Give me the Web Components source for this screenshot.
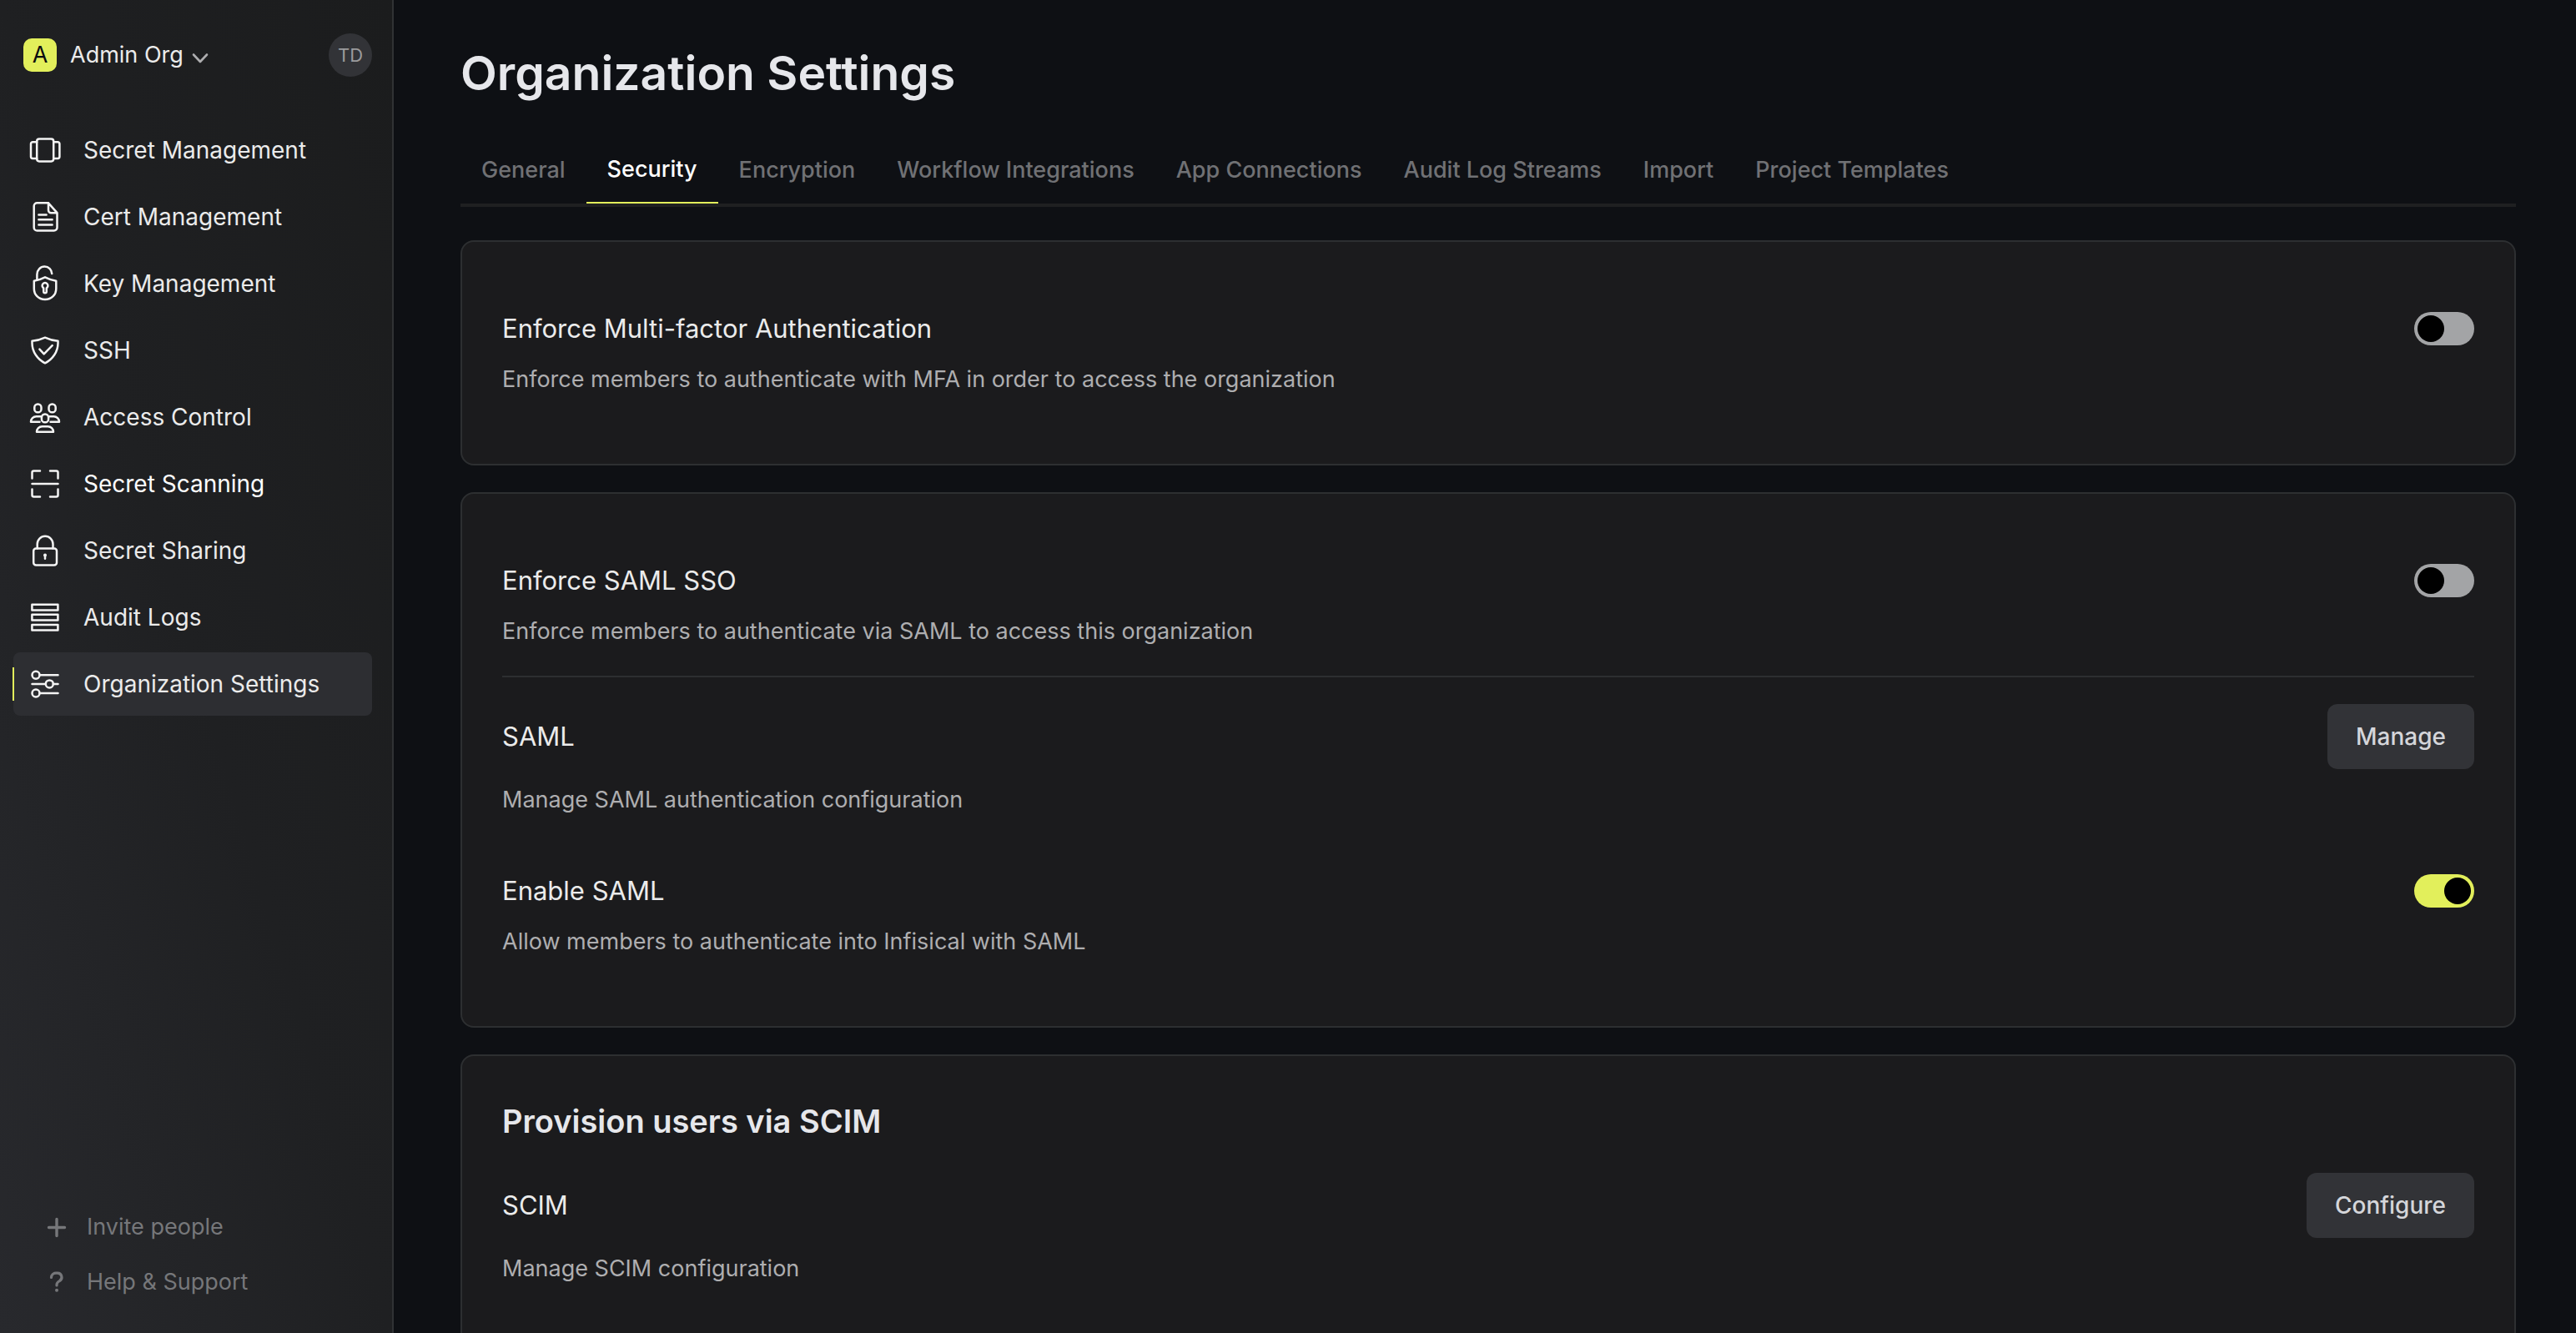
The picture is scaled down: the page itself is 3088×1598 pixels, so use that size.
<!DOCTYPE html>
<html lang="en">
<head>
<meta charset="utf-8">
<title>Organization Settings</title>
<style>
  html, body { margin: 0; height: 100%; }
  body {
    --bg: #0e1014;
    --panel: #1b1b1d;
    --line: #2d2f31;
    --primary: #e2ef5b;
    --text: #ebebeb;
    --soft: #aeaeb0;
    --muted: #707174;
    --control: #323337;
    background: var(--bg);
    color: var(--text);
    font: 400 28px/42px Inter, "Liberation Sans", sans-serif;
  }
</style>
</head>
<body>
<app-shell>
  <side-bar slot="side">
    <org-switcher slot="top" initial="A" user="TD">Admin Org</org-switcher>
    <nav-item icon="vault">Secret Management</nav-item>
    <nav-item icon="note">Cert Management</nav-item>
    <nav-item icon="unlock">Key Management</nav-item>
    <nav-item icon="shield">SSH</nav-item>
    <nav-item icon="groups">Access Control</nav-item>
    <nav-item icon="scan" bright>Secret Scanning</nav-item>
    <nav-item icon="lock">Secret Sharing</nav-item>
    <nav-item icon="list">Audit Logs</nav-item>
    <nav-item icon="sliders" active>Organization Settings</nav-item>
    <foot-action slot="bottom" icon="plus">Invite people</foot-action>
    <foot-action slot="bottom" icon="question">Help &amp; Support</foot-action>
  </side-bar>
  <settings-page>
    <span slot="title">Organization Settings</span>
    <tab-item slot="tabs">General</tab-item>
    <tab-item slot="tabs" active>Security</tab-item>
    <tab-item slot="tabs">Encryption</tab-item>
    <tab-item slot="tabs">Workflow Integrations</tab-item>
    <tab-item slot="tabs">App Connections</tab-item>
    <tab-item slot="tabs">Audit Log Streams</tab-item>
    <tab-item slot="tabs">Import</tab-item>
    <tab-item slot="tabs">Project Templates</tab-item>
    <settings-card>
      <toggle-row>
        <span slot="label">Enforce Multi-factor Authentication</span>
        Enforce members to authenticate with MFA in order to access the organization
      </toggle-row>
    </settings-card>
    <settings-card>
      <toggle-row divided>
        <span slot="label">Enforce SAML SSO</span>
        Enforce members to authenticate via SAML to access this organization
      </toggle-row>
      <action-row>
        <span slot="label">SAML</span>
        <span slot="action">Manage</span>
        Manage SAML authentication configuration
      </action-row>
      <toggle-row checked>
        <span slot="label">Enable SAML</span>
        Allow members to authenticate into Infisical with SAML
      </toggle-row>
    </settings-card>
    <settings-card>
      <card-heading>Provision users via SCIM</card-heading>
      <action-row>
        <span slot="label">SCIM</span>
        <span slot="action">Configure</span>
        Manage SCIM configuration
      </action-row>
    </settings-card>
  </settings-page>
</app-shell>

<script>
const ICONS = {
  vault: '<rect x="10.2" y="6.4" width="20" height="27" rx="2.8"/><path d="M10.2 10.2H5.2a2.2 2.2 0 0 0-2.2 2.2v15.4a2.2 2.2 0 0 0 2.2 2.2h5M30.2 10.2h5a2.2 2.2 0 0 1 2.2 2.2v15.4a2.2 2.2 0 0 1-2.2 2.2h-5"/>',
  note: '<path d="M24 3.3H10.5A3.8 3.8 0 0 0 6.7 7.1v25.6a3.8 3.8 0 0 0 3.8 3.8h20.2a3.8 3.8 0 0 0 3.8-3.8V15.2M24 3.3v8.7a3.2 3.2 0 0 0 3.2 3.2h7.3L24 3.3M12.4 17.4h9.2M12.4 23.3h16.2M12.4 29.6h16.2"/>',
  unlock: '<path d="M6.8 16.8Q13 15.800 20 12.300Q27 15.800 33.300 16.800V26C33.300 33.200 28 39 20 39S6.800 33.200 6.800 26Z"/><path d="M10.400 15.200V9C10.400 3.800 14.300-.4 19.400-.4C24.600-.4 28 3.500 28.200 8"/><path d="M18.200 25.400A3.400 3.400 0 1 1 21.800 25.400V29.500a1.800 1.800 0 0 1-3.600 0Z"/>',
  shield: '<path d="M20 4.7Q12.5 8.3 4.5 8.8V11.5C4.5 21.5 11 31 20 35.3C29 31 35.5 21.5 35.5 11.5V8.8Q27.5 8.3 20 4.7Z"/><path d="M13.4 18.6L18.7 24.4L28.7 14.2"/>',
  groups: '<rect x="7.3" y="4.5" width="8.2" height="9.8" rx="3.9"/><rect x="24.5" y="4.5" width="8.2" height="9.8" rx="3.9"/><rect x="15.9" y="16.5" width="8.2" height="9.8" rx="3.9"/><path d="M14.6 19.2H9.5a6.5 6.5 0 0 0-6.5 6.5H13.5M25.4 19.2H30.5a6.5 6.5 0 0 1 6.5 6.5H26.5M10 37.7a6.5 6.5 0 0 1 6.5-6.5h7a6.5 6.5 0 0 1 6.5 6.5Z"/>',
  scan: '<path d="M4.5 13.5V6.5a2 2 0 0 1 2-2H14M26 4.5h7.5a2 2 0 0 1 2 2V13.5M35.5 26.5V33.5a2 2 0 0 1-2 2H26M14 35.5H6.5a2 2 0 0 1-2-2V26.5M4.5 20H35.5"/>',
  lock: '<rect x="6.2" y="17.6" width="27.8" height="19.8" rx="3"/><path d="M10.7 17.6V12.2a9.4 9.4 0 0 1 18.8 0V17.6"/><path stroke-width="4" d="M20 25.5V25.6"/><path d="M20 25.5V29.8"/>',
  list: '<rect x="4.4" y="4.8" width="31" height="6.6"/><rect x="4.4" y="16.8" width="31" height="6.6"/><rect x="4.4" y="29" width="31" height="6.6"/>',
  sliders: '<circle cx="9" cy="9.2" r="4.5"/><path d="M13.5 9.2H35.5M4.5 19.9H20.8M29.8 19.9H35.5M13.5 31H35.5"/><circle cx="25.3" cy="19.9" r="4.5"/><circle cx="9" cy="31" r="4.5"/>',
  plus: '<path stroke-width="3.4" d="M20 10.5V30.5M10.5 20.5H29.5"/>',
  question: '<path stroke-width="3.2" d="M13.5 14.5a5.5 5.5 0 0 1 5.5-5.3h2a5 5 0 0 1 2.5 9.3C21.5 19.7 20 20.6 20 23V24"/><path stroke-width="4" d="M20 29.7V29.8"/>',
  chevron: '<path stroke-width="2.6" d="M12 15.5L20 24L28 15.5"/>'
};
const icon = name => `<svg class="icon" viewBox="0 0 40 40" width="40" height="40" fill="none" stroke="currentColor" stroke-width="2.5" stroke-linecap="round" stroke-linejoin="round" aria-hidden="true">${ICONS[name]}</svg>`;

const BASE = `
  *, *::before { box-sizing: border-box; }
  button { font: inherit; color: inherit; background: none; border: 0; margin: 0; padding: 0; cursor: pointer; }
  a { color: inherit; text-decoration: none; }
  .icon { flex: none; display: block; overflow: visible; }
`;
function define(name, render) {
  customElements.define(name, class extends HTMLElement {
    constructor() {
      super();
      this.attachShadow({ mode: "open" });
    }
    connectedCallback() {
      if (!this.shadowRoot.firstChild) {
        const t = document.createElement("template");
        const { css, html } = render(this);
        t.innerHTML = `<style>${BASE}${css}</style>${html}`;
        this.shadowRoot.append(t.content.cloneNode(true));
      }
    }
  });
}

define("app-shell", () => ({
  css: `
    :host { display: flex; height: 100vh; overflow: hidden; }
    main { flex: 1; min-width: 0; overflow-y: auto; scrollbar-width: none; }`,
  html: `<slot name="side"></slot><main><slot></slot></main>`
}));

define("side-bar", () => ({
  css: `
    :host { display: flex; flex: none; width: 472px; box-sizing: border-box; border-right: 2px solid #303234;
      background: linear-gradient(to top right, #28292d, #1f2022 50%, #1b1c1d); }
    aside { display: flex; flex-direction: column; flex: 1; padding: 40px 24px 40px 16px; }
    nav { display: flex; flex-direction: column; gap: 4px; margin-top: 50px; }
    footer { display: flex; flex-direction: column; gap: 24px; margin-top: auto; padding-left: 32px; }`,
  html: `<aside><slot name="top"></slot><nav><slot></slot></nav><footer><slot name="bottom"></slot></footer></aside>`
}));

define("org-switcher", el => ({
  css: `
    :host { display: flex; justify-content: space-between; align-items: center; height: 52px; padding-left: 12px; }
    .org { display: flex; align-items: center; font-size: 27px; }
    .logo { width: 40px; height: 40px; line-height: 40px; border-radius: 10px; background: var(--primary); color: #0c0d0f; text-align: center; }
    .name { margin: 0 0 0 16px; }
    .org .icon { color: #adadaf; margin-top: 8px; }
    .user { width: 52px; height: 52px; border-radius: 50%; background: var(--control); color: #9b9b9d; font-size: 22px; line-height: 52px; text-align: center; }`,
  html: `<button class="org"><span class="logo">${el.getAttribute("initial")}</span><span class="name"><slot></slot></span>${icon("chevron")}</button>
    <button class="user">${el.getAttribute("user")}</button>`
}));

define("nav-item", el => ({
  css: `
    :host { display: block; }
    :host([bright]) { color: #fff; }
    a { display: flex; align-items: center; gap: 26px; height: 76px; padding-left: 18px; border-radius: 8px; position: relative; }
    .icon { color: #f4f4f4; }
    :host([active]) a { background: #2d2e32; }
    :host([active]) a::before { content: ""; position: absolute; left: -1px; top: 18px; width: 2px; height: 40px; background: var(--primary); }`,
  html: `<a href="#" ${el.hasAttribute("active") ? 'aria-current="page"' : ""}>${icon(el.getAttribute("icon"))}<span><slot></slot></span></a>`
}));

define("foot-action", el => ({
  css: `
    :host { display: block; color: #76777a; font-size: 27px; }
    button { display: flex; align-items: center; gap: 16px; }`,
  html: `<button>${icon(el.getAttribute("icon"))}<span><slot></slot></span></button>`
}));

define("settings-page", () => ({
  css: `
    :host { display: block; padding: 52px 72px 48px 80px; }
    h1 { margin: 0 0 40px; font-size: 57px; line-height: 72px; font-weight: 600; color: #e6e7eb; }
    .tabs { display: flex; border-bottom: 4px solid #1f2021; margin-bottom: 40px; }
    .cards { display: flex; flex-direction: column; gap: 32px; }`,
  html: `<h1><slot name="title"></slot></h1><div class="tabs" role="tablist"><slot name="tabs"></slot></div><div class="cards"><slot></slot></div>`
}));

define("tab-item", el => ({
  css: `
    :host { display: block; color: var(--muted); font-size: 27px; font-weight: 500; }
    button { display: block; height: 80px; padding: 0 25px; white-space: nowrap; }
    :host([active]) { color: #fff; }
    :host([active]) button { border-bottom: 2px solid var(--primary); }`,
  html: `<button role="tab" aria-selected="${el.hasAttribute("active")}"><slot></slot></button>`
}));

define("settings-card", () => ({
  css: `:host { display: block; padding: 48px; background: var(--panel); border: 2px solid var(--line); border-radius: 16px; }`,
  html: `<slot></slot>`
}));

define("card-heading", () => ({
  css: `
    :host { display: block; }
    h2 { margin: 0; font-size: 38px; line-height: 60px; font-weight: 600; color: #e6e7eb; }`,
  html: `<h2><slot></slot></h2>`
}));

const ROW = `
  :host { display: block; padding: 32px 0; }
  :host([divided]) { border-bottom: 2px solid var(--line); }
  .head { display: flex; align-items: center; justify-content: space-between; margin-bottom: 16px; }
  .label { margin: 0; font-size: 31px; line-height: 48px; font-weight: 400; }
  p { margin: 0; color: var(--soft); font-size: 27px; }`;

define("toggle-row", el => ({
  css: ROW + `
    input { appearance: none; flex: none; margin: 0; width: 72px; height: 40px; padding: 4px; border-radius: 20px; background: #a3a4a6; display: flex; cursor: pointer; }
    input::before { content: ""; width: 32px; height: 32px; border-radius: 50%; background: #000; }
    input:checked { background: var(--primary); justify-content: flex-end; }`,
  html: `<div class="head"><label class="label" for="toggle"><slot name="label"></slot></label>
    <input id="toggle" type="checkbox" role="switch" ${el.hasAttribute("checked") ? "checked" : ""}></div><p><slot></slot></p>`
}));

define("action-row", () => ({
  css: ROW + `
    button { height: 78px; padding: 0 34px; border-radius: 12px; background: var(--control); color: #d5d6da; font-weight: 500; }`,
  html: `<div class="head"><h3 class="label"><slot name="label"></slot></h3><button><slot name="action"></slot></button></div><p><slot></slot></p>`
}));
</script>
</body>
</html>
